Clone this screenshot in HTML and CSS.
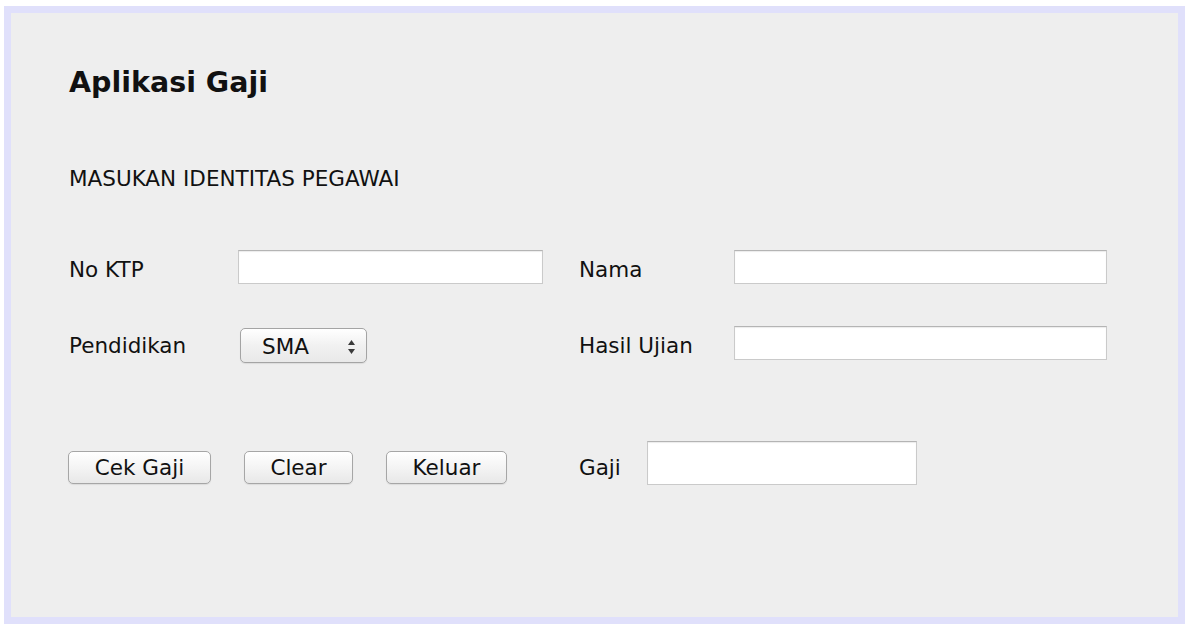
FILE: index.html
```html
<!DOCTYPE html>
<html lang="id">
<head>
    <meta charset="UTF-8">
    <meta name="viewport" content="width=device-width, initial-scale=1.0">
    <title>Aplikasi Gaji</title>
    <link rel="stylesheet" href="styles.css">
</head>
<body>
    <div class="window">
        <h1>Aplikasi Gaji</h1>
        <p class="subtitle">MASUKAN IDENTITAS PEGAWAI</p>

        <div class="form">
            <div class="row">
                <div class="field">
                    <label class="label" for="ktpInput">No KTP</label>
                    <input type="text" id="ktpInput" class="input input-ktp">
                </div>
                <div class="field">
                    <label class="label label-right" for="namaInput">Nama</label>
                    <input type="text" id="namaInput" class="input input-wide">
                </div>
            </div>

            <div class="row row-second">
                <div class="field">
                    <span class="label">Pendidikan</span>
                    <div class="select">
                        <span>SMA</span>
                        <svg width="9" height="16" viewBox="0 0 9 16">
                            <path d="M4.5 1 L8 6 L1 6 Z" fill="#3a3a3a"/>
                            <path d="M1 10 L8 10 L4.5 15 Z" fill="#3a3a3a"/>
                        </svg>
                    </div>
                </div>
                <div class="field">
                    <label class="label label-right" for="ujianInput">Hasil Ujian</label>
                    <input type="text" id="ujianInput" class="input input-wide">
                </div>
            </div>

            <div class="row row-third">
                <div class="btn-group">
                    <button class="btn btn-cek">Cek Gaji</button>
                    <button class="btn btn-clear">Clear</button>
                    <button class="btn btn-keluar">Keluar</button>
                </div>
                <div class="field">
                    <label class="label label-gaji" for="gajiInput">Gaji</label>
                    <input type="text" id="gajiInput" class="input input-gaji">
                </div>
            </div>
        </div>
    </div>
</body>
</html>
```

FILE: styles.css
```css
body {
    font-family: "DejaVu Sans", Verdana, sans-serif;
    background-color: #fff;
    color: #111;
    margin: 0;
    padding: 6px 0 0 4px;
}
.window {
    width: 1109px;
    height: 604px;
    background-color: #eeeeee;
    border: 7px solid #e0e0fb;
    padding-left: 58px;
}
h1 {
    margin: 53px 0 0;
    font-size: 28.5px;
    line-height: 34px;
    font-weight: bold;
    color: #111;
}
.subtitle {
    margin: 66px 0 0;
    font-size: 21.5px;
    line-height: 26px;
}
.form {
    margin-top: 58px;
}
.row {
    display: grid;
    grid-template-columns: 474px 528px;
    column-gap: 36px;
    align-items: start;
}
.row-second {
    margin-top: 42px;
}
.row-third {
    margin-top: 78px;
}
.field {
    display: flex;
    align-items: flex-start;
}
.label {
    width: 169px;
    flex-shrink: 0;
    padding-top: 7px;
    font-size: 21.5px;
    line-height: 26px;
}
.label-right {
    width: 155px;
}
.label-gaji {
    width: 68px;
    padding-top: 14px;
}
.input {
    height: 34px;
    box-sizing: border-box;
    background: #fff;
    border: 1px solid #cacaca;
    border-top-color: #b4b4b4;
    box-shadow: inset 0 1px 1px rgba(0, 0, 0, 0.08);
    padding: 0 6px;
    font: inherit;
    font-size: 21.5px;
    margin: 0;
}
.input-ktp {
    width: 305px;
}
.input-wide {
    width: 373px;
}
.input-gaji {
    width: 270px;
    height: 44px;
}
.select {
    width: 127px;
    height: 35px;
    box-sizing: border-box;
    margin: 2px 0 0 2px;
    padding: 2px 10px 0 21px;
    display: flex;
    justify-content: space-between;
    align-items: center;
    border: 1px solid #a4a4a4;
    border-radius: 5px;
    background: linear-gradient(#ffffff, #f1f1f1 50%, #e9e9e9);
    box-shadow: 0 1px 1px rgba(0, 0, 0, 0.08);
    font-size: 21.5px;
    cursor: pointer;
}
.btn-group {
    display: flex;
    gap: 33px;
    margin: 10px 0 0 -1px;
}
.btn {
    height: 33px;
    box-sizing: border-box;
    padding: 0;
    border: 1px solid #a6a6a6;
    border-radius: 5px;
    background: linear-gradient(#ffffff, #f4f4f4 50%, #e8e8e8);
    box-shadow: 0 1px 1px rgba(0, 0, 0, 0.08);
    font-family: "DejaVu Sans", Verdana, sans-serif;
    font-size: 21.5px;
    line-height: 31px;
    color: #111;
    cursor: pointer;
}
.btn-cek {
    width: 143px;
}
.btn-clear {
    width: 109px;
}
.btn-keluar {
    width: 121px;
}
```
